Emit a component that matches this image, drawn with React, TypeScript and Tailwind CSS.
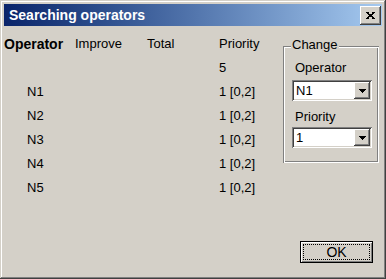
import React from "react";

const rows = ["N1", "N2", "N3", "N4", "N5"];

const raised =
  "shadow-[inset_-1px_-1px_#404040,inset_1px_1px_#fff,inset_-2px_-2px_#808080]";
const sunken =
  "shadow-[inset_1px_1px_#808080,inset_-1px_-1px_#fff,inset_2px_2px_#404040,inset_-2px_-2px_#d4d0c8]";

const CloseGlyph = () => (
  <svg width="9" height="7" viewBox="0 0 9 7" shapeRendering="crispEdges">
    <path
      fill="#000"
      d="M0 0h3v1H0zM6 0h3v1H6zM1 1h2v1H1zM6 1h2v1H6zM2 2h5v1H2zM3 3h3v1H3zM2 4h5v1H2zM1 5h2v1H1zM6 5h2v1H6zM0 6h3v1H0zM6 6h3v1H6z"
    />
  </svg>
);

const Arrow = () => (
  <svg width="7" height="4" viewBox="0 0 7 4" shapeRendering="crispEdges">
    <path fill="#000" d="M0 0h7v1H0zM1 1h5v1H1zM2 2h3v1H2zM3 3h1v1H3z" />
  </svg>
);

const Combo = ({ value }: { value: string }) => (
  <div className={`flex h-[21px] w-[80px] bg-white p-[2px] ${sunken}`}>
    <div className="flex-1 pl-[2px] text-[13px] leading-[17px]">{value}</div>
    <div className={`flex w-[16px] items-center justify-center bg-[#d4d0c8] ${raised}`}>
      <Arrow />
    </div>
  </div>
);

export default function App() {
  return (
    <div
      className="flex h-[279px] w-[386px] flex-col bg-[#d4d0c8] p-[4px] text-black shadow-[inset_-1px_-1px_#404040,inset_1px_1px_#d4d0c8,inset_-2px_-2px_#808080,inset_2px_2px_#fff]"
      style={{ fontFamily: '"Liberation Sans", Arial, sans-serif' }}
    >
      {/* Title bar */}
      <div className="flex h-[22px] items-center justify-between bg-gradient-to-r from-[#0a246a] to-[#a6caf0] pl-[5px] pr-[1px]">
        <span className="text-[14px] font-bold leading-[16px] text-white">Searching operators</span>
        <button className={`flex h-[19px] w-[21px] items-center justify-center bg-[#d4d0c8] ${raised}`}>
          <CloseGlyph />
        </button>
      </div>

      {/* Body */}
      <div className="flex flex-1">
        {/* Operators table */}
        <div className="w-[279px] pt-[6px] text-[13px]">
          <div className="grid h-[24px] grid-cols-[71px_72px_72px_1fr] leading-[24px]">
            <span className="text-[14px] font-bold">Operator</span>
            <span>Improve</span>
            <span>Total</span>
            <span>Priority</span>
          </div>
          <div className="grid h-[24px] grid-cols-[71px_72px_72px_1fr] leading-[24px]">
            <span />
            <span />
            <span />
            <span>5</span>
          </div>
          {rows.map((r) => (
            <div key={r} className="grid h-[24px] grid-cols-[71px_72px_72px_1fr] leading-[24px]">
              <span className="pl-[23px]">{r}</span>
              <span />
              <span />
              <span>1 [0,2]</span>
            </div>
          ))}
        </div>

        {/* Right side */}
        <div className="flex flex-1 flex-col pt-[20px] pb-[12px]">
          <div className="relative h-[117px] w-[96px] pt-[14px] shadow-[inset_1px_1px_#808080,inset_-1px_-1px_#fff,inset_2px_2px_#fff,inset_-2px_-2px_#808080]">
            <span className="absolute -top-[9px] left-[8px] bg-[#d4d0c8] px-[1px] text-[13px] leading-[16px]">
              Change
            </span>
            <div className="ml-[12px] text-[13px] leading-[16px]">Operator</div>
            <div className="ml-[9px] mt-[4px]">
              <Combo value="N1" />
            </div>
            <div className="ml-[12px] mt-[8px] text-[13px] leading-[16px]">Priority</div>
            <div className="ml-[9px] mt-[2px]">
              <Combo value="1" />
            </div>
          </div>
          <div className="mt-auto flex justify-end pr-[9px]">
            <button
              className="flex h-[22px] w-[73px] bg-[#d4d0c8] p-[3px] shadow-[inset_0_0_0_1px_#000,inset_2px_2px_#fff,inset_-2px_-2px_#808080]"
            >
              <span className="flex flex-1 items-center justify-center border border-dotted border-black text-[14px] leading-[14px]">
                OK
              </span>
            </button>
          </div>
        </div>
      </div>
    </div>
  );
}
